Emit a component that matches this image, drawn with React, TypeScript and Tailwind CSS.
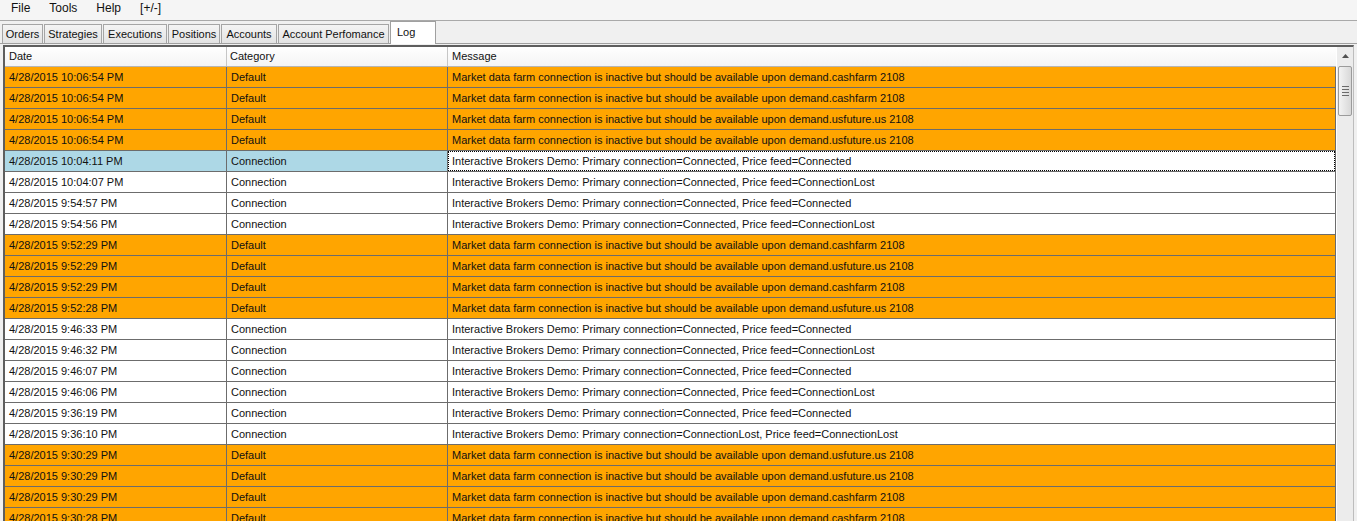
import React from "react";

const CASH = "Market data farm connection is inactive but should be available upon demand.cashfarm 2108";
const US = "Market data farm connection is inactive but should be available upon demand.usfuture.us 2108";
const CON = "Interactive Brokers Demo: Primary connection=Connected, Price feed=Connected";
const LOST = "Interactive Brokers Demo: Primary connection=Connected, Price feed=ConnectionLost";
const LL = "Interactive Brokers Demo: Primary connection=ConnectionLost, Price feed=ConnectionLost";

type Row = { d: string; c: string; m: string };

const rows: Row[] = [
  { d: "4/28/2015 10:06:54 PM", c: "Default", m: CASH },
  { d: "4/28/2015 10:06:54 PM", c: "Default", m: CASH },
  { d: "4/28/2015 10:06:54 PM", c: "Default", m: US },
  { d: "4/28/2015 10:06:54 PM", c: "Default", m: US },
  { d: "4/28/2015 10:04:11 PM", c: "Connection", m: CON },
  { d: "4/28/2015 10:04:07 PM", c: "Connection", m: LOST },
  { d: "4/28/2015 9:54:57 PM", c: "Connection", m: CON },
  { d: "4/28/2015 9:54:56 PM", c: "Connection", m: LOST },
  { d: "4/28/2015 9:52:29 PM", c: "Default", m: CASH },
  { d: "4/28/2015 9:52:29 PM", c: "Default", m: US },
  { d: "4/28/2015 9:52:29 PM", c: "Default", m: CASH },
  { d: "4/28/2015 9:52:28 PM", c: "Default", m: US },
  { d: "4/28/2015 9:46:33 PM", c: "Connection", m: CON },
  { d: "4/28/2015 9:46:32 PM", c: "Connection", m: LOST },
  { d: "4/28/2015 9:46:07 PM", c: "Connection", m: CON },
  { d: "4/28/2015 9:46:06 PM", c: "Connection", m: LOST },
  { d: "4/28/2015 9:36:19 PM", c: "Connection", m: CON },
  { d: "4/28/2015 9:36:10 PM", c: "Connection", m: LL },
  { d: "4/28/2015 9:30:29 PM", c: "Default", m: US },
  { d: "4/28/2015 9:30:29 PM", c: "Default", m: US },
  { d: "4/28/2015 9:30:29 PM", c: "Default", m: CASH },
  { d: "4/28/2015 9:30:28 PM", c: "Default", m: CASH },
];

const tabs: { label: string; w: string }[] = [
  { label: "Orders", w: "w-[41px]" },
  { label: "Strategies", w: "w-[58px]" },
  { label: "Executions", w: "w-[64px]" },
  { label: "Positions", w: "w-[52px]" },
  { label: "Accounts", w: "w-[56px]" },
  { label: "Account Perfomance", w: "w-[111px]" },
];

export default function App() {
  return (
    <div
      className="w-[1357px] h-[521px] overflow-hidden bg-[#f0f0f0] text-[#111]"
      style={{ fontFamily: '"Liberation Sans", Arial, sans-serif' }}
    >
      {/* Menu bar */}
      <div className="h-[21px] bg-[#f5f5f5] border-b border-[#a9a9a9] flex items-center pl-[11px] gap-[19px] text-[12px] leading-none pb-[4px]">
        <span>File</span>
        <span>Tools</span>
        <span>Help</span>
        <span>[+/-]</span>
      </div>

      {/* Tab strip */}
      <div className="h-[23px] flex items-end pl-[2px] gap-[1px] border-b border-[#a0a0a0] text-[11px] leading-none">
        {tabs.map((t) => (
          <div
            key={t.label}
            className={`${t.w} h-[19px] border border-b-0 border-[#a5a5a5] bg-gradient-to-b from-[#f4f4f4] to-[#e3e3e3] flex items-center justify-center`}
          >
            {t.label}
          </div>
        ))}
        <div className="w-[46px] h-[23px] -mb-[1px] border border-b-0 border-[#a0a0a0] bg-white pl-[6px] pt-[5px] text-[11px]">
          Log
        </div>
      </div>

      {/* Grid */}
      <div className="mt-[1px] ml-[3px] w-[1351px] h-[500px] border-l-2 border-t-2 border-[#5e5e5e] border-r border-r-[#bdbdbd] bg-white flex text-[11px] leading-none">
        <div className="w-[1331px] flex flex-col">
          {/* Header */}
          <div className="h-[20px] flex shrink-0 bg-gradient-to-b from-white to-[#f4f4f4] border-b border-[#b5b5b5]">
            <div className="w-[222px] border-r border-[#c6c6c6] flex items-center pl-[4px]">Date</div>
            <div className="w-[221px] border-r border-[#c6c6c6] flex items-center pl-[3px]">Category</div>
            <div className="w-[888px] flex items-center pl-[4px]">Message</div>
          </div>
          {rows.map((r, i) => {
            const orange = r.c === "Default";
            const selected = i === 4;
            const bg = orange ? "bg-[#ffa500]" : selected ? "bg-[#add8e6]" : "bg-white";
            return (
              <div key={i} className="h-[21px] flex shrink-0">
                <div className={`w-[222px] ${bg} border-r border-b border-[#6c6c6c] flex items-center pl-[4px]`}>{r.d}</div>
                <div className={`w-[221px] ${bg} border-r border-b border-[#6c6c6c] flex items-center pl-[4px]`}>{r.c}</div>
                <div
                  className={`relative w-[888px] ${orange ? "bg-[#ffa500]" : "bg-white"} border-r border-b border-[#6c6c6c] flex items-center pl-[4px]`}
                >
                  {r.m}
                  {selected && (
                    <div className="absolute left-0 top-0 right-0 bottom-0 border border-dotted border-black" />
                  )}
                </div>
              </div>
            );
          })}
        </div>

        {/* Scrollbar */}
        <div className="w-[17px] bg-[#ececec] border-l border-white flex flex-col">
          <div className="h-[17px] flex items-center justify-center">
            <svg width="7" height="4" viewBox="0 0 7 4">
              <polygon points="3.5,0 7,4 0,4" fill="#505050" />
            </svg>
          </div>
          <div className="mt-[2px] mx-[1px] h-[50px] rounded-[2px] border border-[#9b9b9b] bg-gradient-to-r from-[#f3f3f3] to-[#d8d8d8] flex flex-col items-center justify-center gap-[2px]">
            <div className="w-[7px] h-[1px] bg-[#6a6a6a]" />
            <div className="w-[7px] h-[1px] bg-[#6a6a6a]" />
            <div className="w-[7px] h-[1px] bg-[#6a6a6a]" />
            <div className="w-[7px] h-[1px] bg-[#6a6a6a]" />
          </div>
        </div>
      </div>
    </div>
  );
}
